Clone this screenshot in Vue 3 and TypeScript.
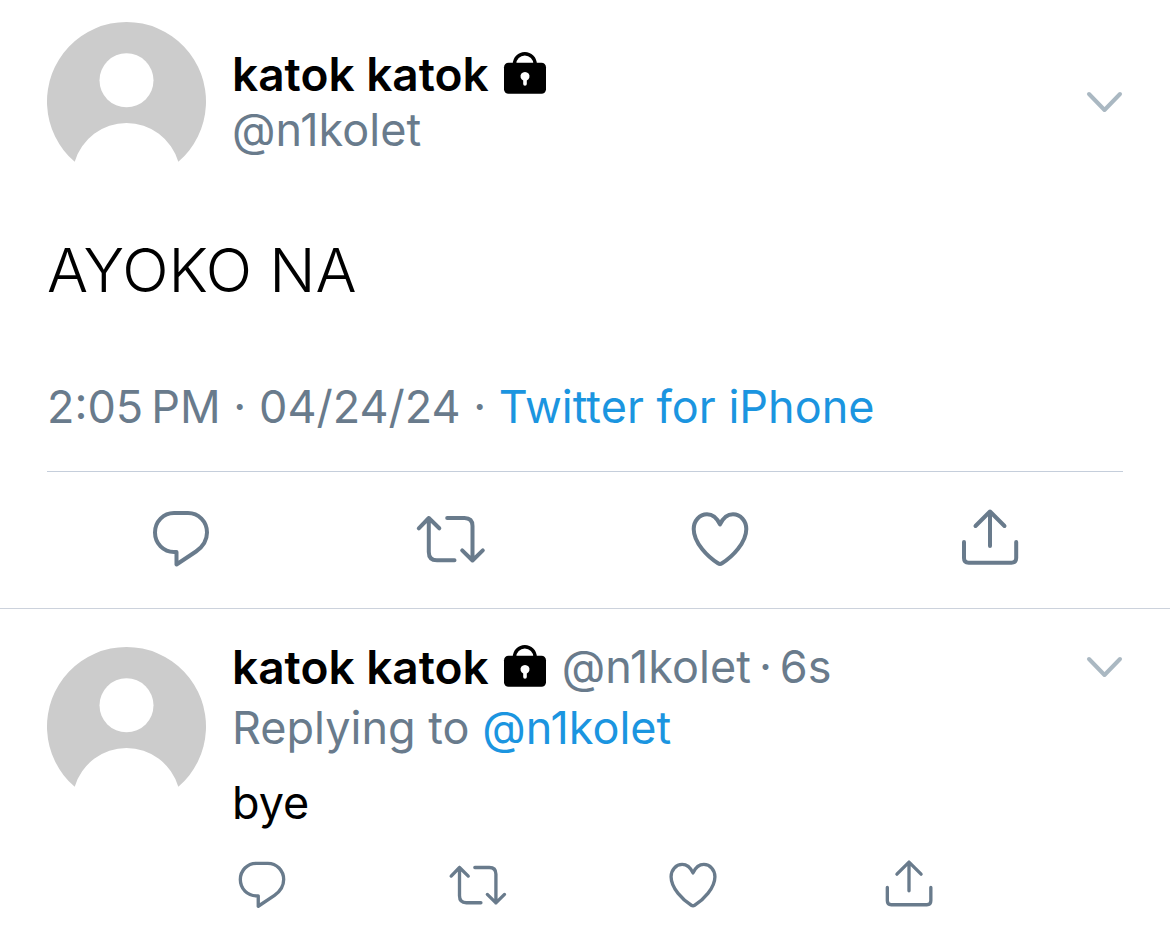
<script setup lang="ts">
import { h, type FunctionalComponent } from 'vue'

interface Action {
  label: string
  paths: string[]
}

const user = { name: 'katok katok', handle: '@n1kolet' }

const actions: Action[] = [
  {
    label: 'Reply',
    paths: [
      'M31.5 49H29C18.500 49 10 40.500 10 29.500C10 18.500 18.500 10 29 10H43C53.500 10 62 18.500 62 29.500C62 37.500 57.500 44 51 48.500L31.500 61.500Z',
    ],
  },
  {
    label: 'Retweet',
    paths: [
      'M3.800 25.300L13.800 15L24.300 25.300M13.800 15V49Q13.800 57.300 22 57.300H39.500',
      'M32.200 15H49.500Q57.500 15 57.500 23V57.500M47.200 47.300L57.500 57.500L67.800 47.300',
    ],
  },
  {
    label: 'Like',
    paths: [
      'M36 21.500C33 15 28.500 11.300 23 11.300C15.500 11.300 9.700 18 9.700 26C9.700 40 24 54 34 60.300Q36 61.500 38 60.300C48 54 62.300 40 62.300 26C62.300 18 56.500 11.300 49 11.300C43.500 11.300 39 15 36 21.500Z',
    ],
  },
  {
    label: 'Share',
    paths: [
      'M21.500 23L36 8.500L50.500 23M36 8.500V43',
      'M10 39V55Q10 59.700 14.700 59.700H57.500Q62.200 59.700 62.200 55V39',
    ],
  },
]

const Avatar: FunctionalComponent = () =>
  h('svg', { viewBox: '0 0 159 159', 'aria-hidden': 'true' }, [
    h('path', {
      fill: '#cccccc',
      d: 'M27.7 139.8A79.5 79.5 0 1 1 131.3 139.8A54 54 0 0 0 27.7 139.8Z',
    }),
    h('circle', { cx: 79.5, cy: 58.3, r: 27, fill: '#ffffff' }),
  ])

const Lock: FunctionalComponent = () =>
  h('svg', { viewBox: '0 0 42 42', role: 'img', 'aria-label': 'Protected account' }, [
    h('path', { d: 'M10.500 13V12A10.300 10.300 0 0 1 31.100 12V13', fill: 'none', stroke: '#000000', 'stroke-width': 3.4 }),
    h('rect', { x: 0, y: 10.7, width: 42, height: 31, rx: 4.500, fill: '#000000' }),
    h('path', { d: 'M19.200 28.500A4.500 4.500 0 1 1 22.800 28.500V32A1.800 1.800 0 0 1 19.200 32Z', fill: '#ffffff' }),
  ])

const Chevron: FunctionalComponent = () =>
  h('svg', { viewBox: '0 0 38 22', 'aria-hidden': 'true' }, [
    h('path', {
      d: 'M4 3L19.500 19L35 3',
      fill: 'none',
      stroke: '#aab8c2',
      'stroke-width': 4,
      'stroke-linecap': 'round',
      'stroke-linejoin': 'round',
    }),
  ])
</script>

<template>
  <main class="thread">
    <article class="tweet">
      <header class="head">
        <Avatar class="avatar" />
        <div class="who">
          <div class="line">
            <strong class="name">{{ user.name }}</strong>
            <Lock class="lock" />
          </div>
          <div class="muted">{{ user.handle }}</div>
        </div>
        <button class="more" type="button" aria-label="More options"><Chevron class="chevron" /></button>
      </header>
      <p class="body">AYOKO NA</p>
      <p class="meta">2:05&#8239;PM · 04/24/24 · <a href="#">Twitter for iPhone</a></p>
      <div class="actions">
        <button v-for="a in actions" :key="a.label" type="button" :aria-label="a.label">
          <svg viewBox="0 0 72 72" aria-hidden="true"><path v-for="d in a.paths" :key="d" :d="d" /></svg>
        </button>
      </div>
    </article>

    <article class="reply">
      <Avatar class="avatar" />
      <div class="content">
        <div class="line">
          <strong class="name">{{ user.name }}</strong>
          <Lock class="lock" />
          <span class="muted">{{ user.handle }}</span>
          <span class="muted dot">·</span>
          <span class="muted">6s</span>
        </div>
        <p class="muted context">Replying to <a href="#">{{ user.handle }}</a></p>
        <p class="text">bye</p>
        <div class="actions small">
          <button v-for="a in actions" :key="a.label" type="button" :aria-label="a.label">
            <svg viewBox="0 0 72 72" aria-hidden="true"><path v-for="d in a.paths" :key="d" :d="d" /></svg>
          </button>
        </div>
      </div>
      <button class="more" type="button" aria-label="More options"><Chevron class="chevron" /></button>
    </article>
  </main>
</template>

<style>
body {
  margin: 0;
  background: #ffffff;
}
</style>

<style scoped>
.thread {
  font-family: Inter, "Liberation Sans", sans-serif;
  font-size: 45px;
  line-height: 56px;
  color: #000000;
}
p {
  margin: 0;
}
a {
  color: #1b95e0;
  text-decoration: none;
}
button {
  display: block;
  padding: 0;
  border: 0;
  background: none;
  cursor: pointer;
}
svg {
  display: block;
  overflow: visible;
}
.tweet {
  padding: 22px 47px 33px;
  border-bottom: 1px solid #ccd2dc;
}
.head,
.reply {
  display: flex;
  align-items: flex-start;
  gap: 26px;
}
.avatar {
  flex: none;
  width: 159px;
  height: 159px;
}
.who {
  flex: 1;
  padding-top: 24px;
}
.line {
  display: flex;
  align-items: center;
  white-space: nowrap;
}
.name {
  font-size: 46px;
  font-weight: 600;
}
.lock {
  flex: none;
  width: 42px;
  height: 42px;
  margin: -2px 16px 0 15px;
}
.muted,
.meta {
  color: #697b8c;
}
.dot {
  margin: 0 8px;
}
.more {
  flex: none;
  margin-top: 69px;
}
.chevron {
  width: 38px;
  height: 22px;
}
.body {
  margin-top: 51px;
  font-size: 61px;
  font-weight: 300;
  line-height: 76px;
}
.meta {
  margin-top: 71px;
  padding-bottom: 36px;
  border-bottom: 1px solid #c5cedb;
}
.actions {
  display: flex;
  justify-content: space-between;
  padding: 31px 97px 0 98px;
}
.actions svg {
  width: 72px;
  height: 72px;
  fill: none;
  stroke: #697b8c;
  stroke-width: 4;
  stroke-linecap: round;
  stroke-linejoin: round;
}
.reply {
  padding: 30px 47px 16px;
}
.reply .avatar {
  margin-top: 8px;
}
.reply .more {
  margin-top: 17px;
}
.content {
  flex: 1;
}
.context {
  margin-top: 5px;
}
.text {
  margin-top: 19px;
}
.actions.small {
  max-width: 707px;
  padding: 24px 0 0;
}
.small svg {
  width: 60px;
  height: 60px;
}
</style>
